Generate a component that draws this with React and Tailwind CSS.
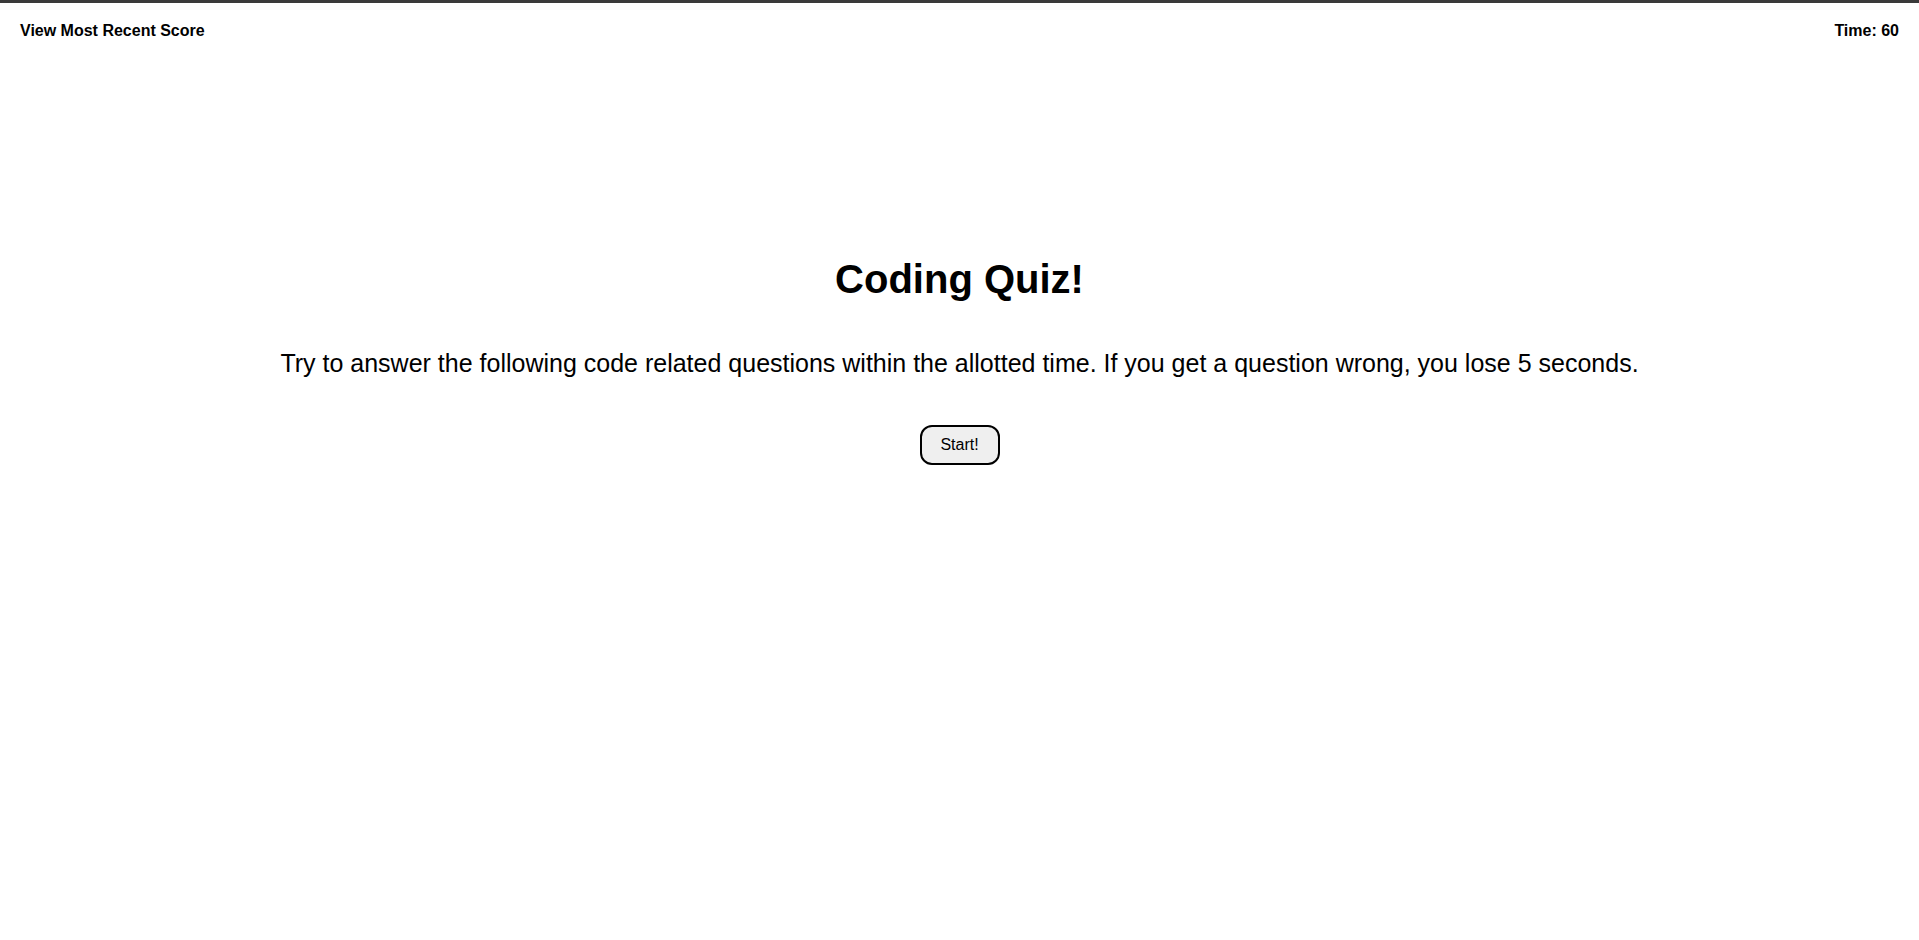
export default function App() {
  return (
    <div className="min-h-screen bg-white text-black border-t-[3px] border-[#3a3a3a]" style={{ fontFamily: '"Liberation Sans", Arial, sans-serif' }}>
      {/* top bar */}
      <header className="flex justify-between items-start px-[20px] pt-[16px] text-[16px] font-bold leading-normal">
        <a href="#" className="text-black">View Most Recent Score</a>
        <span>Time: 60</span>
      </header>

      {/* intro */}
      <main className="flex flex-col items-center text-center pt-[206px]">
        <h1 className="text-[40px] font-bold leading-normal">Coding Quiz!</h1>
        <p className="mt-[36px] text-[25px] leading-normal">
          Try to answer the following code related questions within the allotted time. If you get a question wrong, you lose 5 seconds.
        </p>
        <button className="mt-[42px] w-[80px] h-[40px] bg-[#efefef] border-2 border-black rounded-[12px] text-[16px] leading-none">
          Start!
        </button>
      </main>
    </div>
  );
}
